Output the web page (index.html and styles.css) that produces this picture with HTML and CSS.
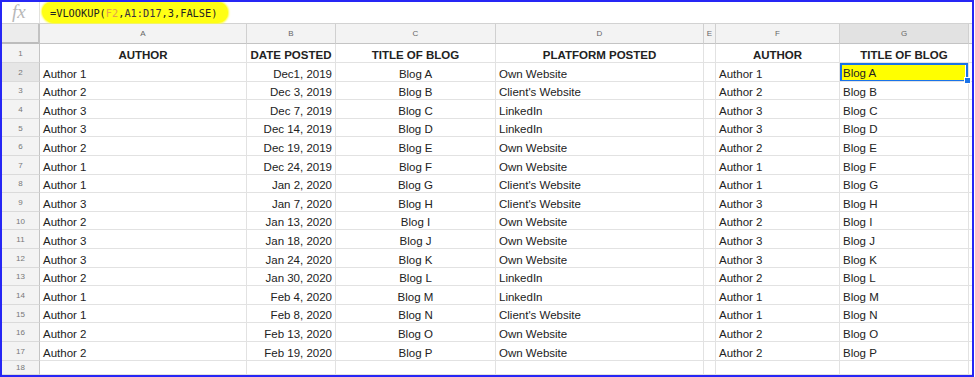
FILE: index.html
```html
<!DOCTYPE html>
<html lang="en">
<head>
  <meta charset="UTF-8" />
  <title>VLOOKUP - Blog Posts</title>
  <link rel="stylesheet" href="styles.css">
</head>
<body>
  <div class="frame">
    <div class="fbar">
      <div class="fx">fx</div>
      <div class="formula"><span class="hl">=VLOOKUP(<span class="ref1">F2</span>,<span class="ref2">A1:D17</span>,3,FALSE)</span></div>
    </div>

    <div class="sheet">
      <!-- column letters -->
      <div class="corner"></div>
      <div class="ch">A</div><div class="ch">B</div><div class="ch">C</div><div class="ch">D</div>
      <div class="ch">E</div><div class="ch">F</div><div class="ch on">G</div><div class="ch"></div>

      <div class="rh">1</div>
      <div class="c m b">AUTHOR</div><div class="c m b">DATE POSTED</div><div class="c m b">TITLE OF BLOG</div><div class="c m b">PLATFORM POSTED</div>
      <div class="c"></div><div class="c m b">AUTHOR</div><div class="c m b">TITLE OF BLOG</div><div class="c"></div>

      <div class="rh on">2</div>
      <div class="c">Author 1</div><div class="c r">Dec1, 2019</div><div class="c m">Blog A</div><div class="c">Own Website</div>
      <div class="c"></div><div class="c">Author 1</div><div class="c sel"><span class="mark">Blog A</span></div><div class="c"></div>

      <div class="rh">3</div>
      <div class="c">Author 2</div><div class="c r">Dec 3, 2019</div><div class="c m">Blog B</div><div class="c">Client's Website</div>
      <div class="c"></div><div class="c">Author 2</div><div class="c">Blog B</div><div class="c"></div>

      <div class="rh">4</div>
      <div class="c">Author 3</div><div class="c r">Dec 7, 2019</div><div class="c m">Blog C</div><div class="c">LinkedIn</div>
      <div class="c"></div><div class="c">Author 3</div><div class="c">Blog C</div><div class="c"></div>

      <div class="rh">5</div>
      <div class="c">Author 3</div><div class="c r">Dec 14, 2019</div><div class="c m">Blog D</div><div class="c">LinkedIn</div>
      <div class="c"></div><div class="c">Author 3</div><div class="c">Blog D</div><div class="c"></div>

      <div class="rh">6</div>
      <div class="c">Author 2</div><div class="c r">Dec 19, 2019</div><div class="c m">Blog E</div><div class="c">Own Website</div>
      <div class="c"></div><div class="c">Author 2</div><div class="c">Blog E</div><div class="c"></div>

      <div class="rh">7</div>
      <div class="c">Author 1</div><div class="c r">Dec 24, 2019</div><div class="c m">Blog F</div><div class="c">Own Website</div>
      <div class="c"></div><div class="c">Author 1</div><div class="c">Blog F</div><div class="c"></div>

      <div class="rh">8</div>
      <div class="c">Author 1</div><div class="c r">Jan 2, 2020</div><div class="c m">Blog G</div><div class="c">Client's Website</div>
      <div class="c"></div><div class="c">Author 1</div><div class="c">Blog G</div><div class="c"></div>

      <div class="rh">9</div>
      <div class="c">Author 3</div><div class="c r">Jan 7, 2020</div><div class="c m">Blog H</div><div class="c">Client's Website</div>
      <div class="c"></div><div class="c">Author 3</div><div class="c">Blog H</div><div class="c"></div>

      <div class="rh">10</div>
      <div class="c">Author 2</div><div class="c r">Jan 13, 2020</div><div class="c m">Blog I</div><div class="c">Own Website</div>
      <div class="c"></div><div class="c">Author 2</div><div class="c">Blog I</div><div class="c"></div>

      <div class="rh">11</div>
      <div class="c">Author 3</div><div class="c r">Jan 18, 2020</div><div class="c m">Blog J</div><div class="c">Own Website</div>
      <div class="c"></div><div class="c">Author 3</div><div class="c">Blog J</div><div class="c"></div>

      <div class="rh">12</div>
      <div class="c">Author 3</div><div class="c r">Jan 24, 2020</div><div class="c m">Blog K</div><div class="c">Own Website</div>
      <div class="c"></div><div class="c">Author 3</div><div class="c">Blog K</div><div class="c"></div>

      <div class="rh">13</div>
      <div class="c">Author 2</div><div class="c r">Jan 30, 2020</div><div class="c m">Blog L</div><div class="c">LinkedIn</div>
      <div class="c"></div><div class="c">Author 2</div><div class="c">Blog L</div><div class="c"></div>

      <div class="rh">14</div>
      <div class="c">Author 1</div><div class="c r">Feb 4, 2020</div><div class="c m">Blog M</div><div class="c">LinkedIn</div>
      <div class="c"></div><div class="c">Author 1</div><div class="c">Blog M</div><div class="c"></div>

      <div class="rh">15</div>
      <div class="c">Author 1</div><div class="c r">Feb 8, 2020</div><div class="c m">Blog N</div><div class="c">Client's Website</div>
      <div class="c"></div><div class="c">Author 1</div><div class="c">Blog N</div><div class="c"></div>

      <div class="rh">16</div>
      <div class="c">Author 2</div><div class="c r">Feb 13, 2020</div><div class="c m">Blog O</div><div class="c">Own Website</div>
      <div class="c"></div><div class="c">Author 2</div><div class="c">Blog O</div><div class="c"></div>

      <div class="rh">17</div>
      <div class="c">Author 2</div><div class="c r">Feb 19, 2020</div><div class="c m">Blog P</div><div class="c">Own Website</div>
      <div class="c"></div><div class="c">Author 2</div><div class="c">Blog P</div><div class="c"></div>

      <div class="rh">18</div>
      <div class="c"></div><div class="c"></div><div class="c"></div><div class="c"></div>
      <div class="c"></div><div class="c"></div><div class="c"></div><div class="c"></div>
    </div>
  </div>
</body>
</html>
```

FILE: styles.css
```css
body {
  margin: 0;
  background: #ffffff;
  font-family: "Liberation Sans", Arial, sans-serif;
}
.frame {
  width: 974px;
  height: 377px;
  box-sizing: border-box;
  border: 2px solid #2626f5;
  display: flex;
  flex-direction: column;
  overflow: hidden;
}

/* formula bar */
.fbar {
  display: flex;
  height: 21px;
  flex-shrink: 0;
  border-bottom: 1px solid #d2d2d2;
}
.fx {
  width: 38px;
  box-sizing: border-box;
  border-right: 1px solid #e2e2e2;
  padding-left: 10px;
  font-family: "Liberation Serif", serif;
  font-style: italic;
  font-size: 19px;
  line-height: 19px;
  color: #b8b8b8;
}
.formula {
  display: flex;
  align-items: stretch;
}
.hl {
  display: flex;
  align-items: center;
  margin-left: 2px;
  padding: 0 11px 0 8px;
  background: #ffff14;
  border-radius: 9px 10px 10px 12px;
  box-shadow: 0 0 2px 1px #ffff40;
  font-family: "DejaVu Sans Mono", monospace;
  font-size: 10.3px;
  color: #222;
}
.ref1 { color: #e3a24a; }
.ref2 { color: #3b3040; }

/* grid */
.sheet {
  flex: 1;
  display: grid;
  grid-template-columns: 38px 207px 89px 160px 208px 12px 124px 129px 1fr;
  grid-template-rows: 20px 19px repeat(16, 18.6px) 1fr;
  font-size: 11.5px;
  color: #222;
}
.corner {
  background: #ececec;
  border-right: 2px solid #c2c2c2;
  border-bottom: 3px solid #bcbcbc;
  margin-bottom: -1px;
}
.ch {
  display: flex;
  align-items: center;
  justify-content: center;
  background: #f3f3f3;
  border-right: 1px solid #d0d0d0;
  border-bottom: 1px solid #c4c4c4;
  font-size: 8px;
  color: #666;
}
.ch.on { background: #e2e2e2; }
.rh {
  display: flex;
  align-items: center;
  justify-content: center;
  background: #f3f3f3;
  border-right: 1px solid #c4c4c4;
  border-bottom: 1px solid #dadada;
  font-size: 8px;
  color: #777;
  padding-top: 1px;
}
.rh.on { background: #e6e6e6; }
.c {
  display: flex;
  align-items: flex-end;
  padding: 0 3px;
  line-height: 14px;
  white-space: nowrap;
  overflow: hidden;
  border-right: 1px solid #e2e2e2;
  border-bottom: 1px solid #e2e2e2;
  box-sizing: border-box;
}
.c.r { justify-content: flex-end; }
.c.m { justify-content: center; }
.c.b { font-weight: bold; }

/* selected cell */
.c.sel {
  position: relative;
  overflow: visible;
  padding: 2px 3px 1px 2px;
  align-items: stretch;
  box-shadow: inset 0 0 0 2px #1a73e8;
}
.mark {
  flex: 1;
  display: flex;
  align-items: flex-end;
  padding-left: 1px;
  background: #ffff00;
}
.c.sel::after {
  content: "";
  position: absolute;
  right: -3px;
  bottom: -3px;
  width: 5px;
  height: 5px;
  background: #1a73e8;
  border: 1px solid #ffffff;
}
```
